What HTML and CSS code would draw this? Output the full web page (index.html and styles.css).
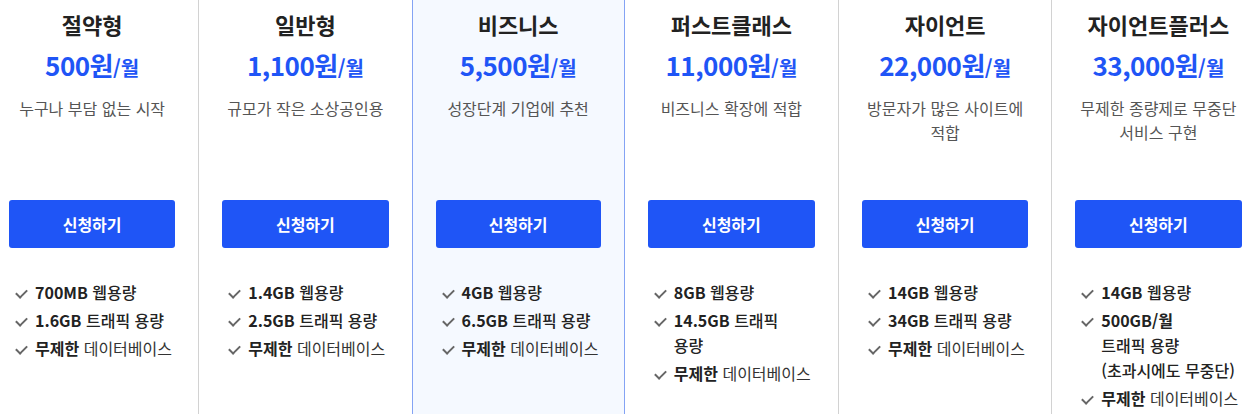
FILE: index.html
```html
<!DOCTYPE html>
<html lang="ko">
<head>
<meta charset="utf-8">
<link rel="stylesheet" href="styles.css">
</head>
<body>
<div class="viewport">
  <div class="plans">
    <section class="plan">
      <h2 class="plan-name">절약형</h2>
      <p class="price"><strong>500원</strong><span class="unit">/월</span></p>
      <p class="desc">누구나 부담 없는 시작</p>
      <a class="apply" href="#">신청하기</a>
      <ul class="features">
        <li><b>700MB</b> 웹용량</li>
        <li><b>1.6GB</b> 트래픽 용량</li>
        <li><b>무제한</b> <span class="reg">데이터베이스</span></li>
      </ul>
    </section>
    <section class="plan">
      <h2 class="plan-name">일반형</h2>
      <p class="price"><strong>1,100원</strong><span class="unit">/월</span></p>
      <p class="desc">규모가 작은 소상공인용</p>
      <a class="apply" href="#">신청하기</a>
      <ul class="features">
        <li><b>1.4GB</b> 웹용량</li>
        <li><b>2.5GB</b> 트래픽 용량</li>
        <li><b>무제한</b> <span class="reg">데이터베이스</span></li>
      </ul>
    </section>
    <section class="plan featured">
      <h2 class="plan-name">비즈니스</h2>
      <p class="price"><strong>5,500원</strong><span class="unit">/월</span></p>
      <p class="desc">성장단계 기업에 추천</p>
      <a class="apply" href="#">신청하기</a>
      <ul class="features">
        <li><b>4GB</b> 웹용량</li>
        <li><b>6.5GB</b> 트래픽 용량</li>
        <li><b>무제한</b> <span class="reg">데이터베이스</span></li>
      </ul>
    </section>
    <section class="plan after-featured">
      <h2 class="plan-name">퍼스트클래스</h2>
      <p class="price"><strong>11,000원</strong><span class="unit">/월</span></p>
      <p class="desc">비즈니스 확장에 적합</p>
      <a class="apply" href="#">신청하기</a>
      <ul class="features">
        <li><b>8GB</b> 웹용량</li>
        <li><b>14.5GB</b> 트래픽<br>용량</li>
        <li><b>무제한</b> <span class="reg">데이터베이스</span></li>
      </ul>
    </section>
    <section class="plan">
      <h2 class="plan-name">자이언트</h2>
      <p class="price"><strong>22,000원</strong><span class="unit">/월</span></p>
      <p class="desc">방문자가 많은 사이트에<br>적합</p>
      <a class="apply" href="#">신청하기</a>
      <ul class="features">
        <li><b>14GB</b> 웹용량</li>
        <li><b>34GB</b> 트래픽 용량</li>
        <li><b>무제한</b> <span class="reg">데이터베이스</span></li>
      </ul>
    </section>
    <section class="plan">
      <h2 class="plan-name">자이언트플러스</h2>
      <p class="price"><strong>33,000원</strong><span class="unit">/월</span></p>
      <p class="desc">무제한 종량제로 무중단<br>서비스 구현</p>
      <a class="apply" href="#">신청하기</a>
      <ul class="features">
        <li><b>14GB</b> 웹용량</li>
        <li><b>500GB/월</b><br>트래픽 용량<br>(초과시에도 무중단)</li>
        <li><b>무제한</b> <span class="reg">데이터베이스</span></li>
      </ul>
    </section>
  </div>
</div>
</body>
</html>
```

FILE: styles.css
```css
* { box-sizing: border-box; }

html, body {
  margin: 0;
  padding: 0;
  background: #fff;
}

body {
  font-family: "Noto Sans CJK KR", "Noto Sans", sans-serif;
  color: #222;
}

.viewport {
  width: 1255px;
  height: 414px;
  overflow: hidden;
}

.plans {
  display: grid;
  grid-template-columns: repeat(6, 213.25px);
  margin-left: -15px;
  height: 414px;
}

.plan {
  display: flex;
  flex-direction: column;
  align-items: stretch;
  padding: 0 23px;
  border-left: 1px solid #d2d2d2;
  text-align: center;
}

.plan.featured {
  background: #f5f9ff;
  border-left: 1px solid #84a3f4;
  border-right: 1px solid #84a3f4;
}

.plan.after-featured {
  border-left: none;
}

.plan-name {
  margin: 9px 0 0;
  font-size: 22px;
  line-height: 30px;
  font-weight: 700;
  color: #222;
}

.price {
  margin: 8px 0 0;
  line-height: 36px;
  color: #1f55f6;
  font-size: 20px;
  font-weight: 700;
}

.price strong {
  font-size: 26px;
  font-weight: 700;
  letter-spacing: -0.5px;
}

.price .unit {
  font-size: 20px;
}

.desc {
  margin: 10px 0 0;
  min-height: 48px;
  font-size: 16px;
  line-height: 24px;
  color: #555;
}

.apply {
  display: flex;
  align-items: center;
  justify-content: center;
  height: 48px;
  margin-top: 56px;
  background: #1f55f6;
  color: #fff;
  border-radius: 3px;
  font-size: 16px;
  font-weight: 700;
  text-decoration: none;
}

.features {
  list-style: none;
  margin: 32px 0 0;
  padding: 0 0 0 26px;
  text-align: left;
  font-size: 16px;
  line-height: 25px;
  font-weight: 500;
  color: #222;
}

.features li {
  position: relative;
  margin-bottom: 3px;
}

.features li::before {
  content: "";
  position: absolute;
  left: -19px;
  top: 9px;
  width: 9px;
  height: 5px;
  border-left: 2px solid #666;
  border-bottom: 2px solid #666;
  transform: rotate(-45deg);
  transform-origin: center;
}

.features b {
  font-weight: 700;
}

.features .reg {
  font-weight: 400;
  color: #333;
}
```
